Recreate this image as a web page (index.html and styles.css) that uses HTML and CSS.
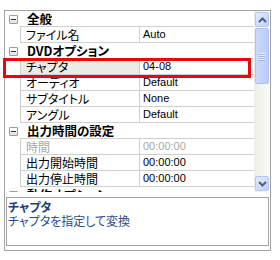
FILE: index.html
```html
<!DOCTYPE html>
<html lang="ja">
<head>
<meta charset="utf-8">
<link rel="stylesheet" href="styles.css">
</head>
<body>
<div class="panel">
  <div class="grid-wrap">
    <div class="grid">
      <div class="row cat"><span class="gut"><i class="minus"></i></span><span class="cname">全般</span></div>
      <div class="row prop"><span class="gut"></span><span class="lbl">ファイル名</span><span class="val">Auto</span></div>
      <div class="row cat"><span class="gut"><i class="minus"></i></span><span class="cname">DVDオプション</span></div>
      <div class="row prop sel"><span class="gut"></span><span class="lbl">チャプタ</span><span class="val">04-08</span></div>
      <div class="row prop"><span class="gut"></span><span class="lbl">オーディオ</span><span class="val">Default</span></div>
      <div class="row prop"><span class="gut"></span><span class="lbl">サブタイトル</span><span class="val">None</span></div>
      <div class="row prop"><span class="gut"></span><span class="lbl">アングル</span><span class="val">Default</span></div>
      <div class="row cat"><span class="gut"><i class="minus"></i></span><span class="cname">出力時間の設定</span></div>
      <div class="row prop dis"><span class="gut"></span><span class="lbl">時間</span><span class="val">00:00:00</span></div>
      <div class="row prop"><span class="gut"></span><span class="lbl">出力開始時間</span><span class="val">00:00:00</span></div>
      <div class="row prop"><span class="gut"></span><span class="lbl">出力停止時間</span><span class="val">00:00:00</span></div>
      <div class="row cat"><span class="gut"><i class="minus"></i></span><span class="cname">動作オプション</span></div>
    </div>
    <div class="scrollbar">
      <div class="sbtn"><svg width="9" height="6" viewBox="0 0 9 6"><path d="M1 5 L4.5 1.5 L8 5" fill="none" stroke="#4d6185" stroke-width="2"/></svg></div>
      <div class="track">
        <div class="thumb"><span class="grip"></span><span class="grip"></span><span class="grip"></span><span class="grip"></span></div>
      </div>
      <div class="sbtn"><svg width="9" height="6" viewBox="0 0 9 6"><path d="M1 1 L4.5 4.5 L8 1" fill="none" stroke="#4d6185" stroke-width="2"/></svg></div>
    </div>
  </div>
  <div class="desc">
    <div class="dtitle">チャプタ</div>
    <div class="dtext">チャプタを指定して変換</div>
  </div>
  <div class="mark"></div>
</div>
</body>
</html>
```
FILE: styles.css
```css
html, body {
  margin: 0;
  padding: 0;
  background: #ffffff;
}
body {
  font-family: "Noto Sans CJK JP", "Liberation Sans", sans-serif;
  font-size: 12px;
  font-feature-settings: "palt";
  color: #000;
}
.panel {
  position: relative;
  margin: 10px 0 0 4px;
  width: 267px;
  height: 241px;
  box-sizing: border-box;
  border: 1px solid #a3a3a3;
  display: flex;
  flex-direction: column;
}
.grid-wrap {
  display: flex;
  height: 181px;
}
.grid {
  flex: 1;
  overflow: hidden;
}
.row {
  display: grid;
  grid-template-columns: 15px 119px 1fr;
  height: 16px;
}
.gut {
  display: flex;
  align-items: center;
  justify-content: center;
  padding-left: 2px;
}
.minus {
  display: block;
  width: 7px;
  height: 7px;
  border: 1px solid #94a0a4;
  border-radius: 1px;
  background: linear-gradient(#ffffff, #e4e2da);
  position: relative;
}
.minus::after {
  content: "";
  position: absolute;
  left: 1px;
  top: 3px;
  width: 5px;
  height: 1px;
  background: #333;
}
.cname {
  grid-column: 2 / 4;
  font-weight: bold;
  line-height: 15px;
  padding-left: 7px;
  border-bottom: 1px solid #cfcfcf;
  white-space: nowrap;
  font-size: 12.5px;
}
.lbl, .val {
  line-height: 15px;
  border-left: 1px solid #cfcfcf;
  border-bottom: 1px solid #cfcfcf;
  white-space: nowrap;
  overflow: hidden;
}
.lbl {
  padding-left: 5px;
}
.val {
  padding-left: 3px;
  font-family: "Liberation Sans", sans-serif;
  font-size: 11px;
}
.sel .lbl {
  background: #ecebe5;
}
.dis .lbl, .dis .val {
  color: #a8a8a8;
}
.scrollbar {
  width: 16px;
  display: flex;
  flex-direction: column;
  background: linear-gradient(90deg, #eeede6, #fbfbf8);
}
.sbtn {
  height: 15px;
  margin: 1px 1px 0 1px;
  box-sizing: border-box;
  border: 1px solid #b5c8f3;
  border-radius: 2px;
  background: linear-gradient(135deg, #e4ebfd, #bfd0fa);
  display: flex;
  align-items: center;
  justify-content: center;
}
.sbtn:last-child {
  margin: 0 1px 1px 1px;
}
.track {
  flex: 1;
  padding: 1px 1px;
}
.thumb {
  height: 56px;
  box-sizing: border-box;
  border: 1px solid #adc2f2;
  border-radius: 2px;
  background: linear-gradient(90deg, #cbd9fc, #bccdf8);
  display: flex;
  flex-direction: column;
  align-items: center;
  justify-content: center;
  gap: 1px;
}
.grip {
  display: block;
  width: 6px;
  height: 1px;
  background: #eef3fe;
  box-shadow: 0 1px 0 #9cb2e8;
}
.desc {
  margin: 5px 1px 4px 1px;
  border: 1px solid #a3a3a3;
  flex: 1;
  padding: 2px 1px;
  color: #1d3d7c;
}
.dtitle {
  font-weight: bold;
  line-height: 14px;
}
.dtext {
  line-height: 14px;
  color: #2a4b8f;
}
.mark {
  position: absolute;
  left: -2px;
  top: 47px;
  width: 248px;
  height: 20px;
  box-sizing: border-box;
  border: 3px solid #e8070e;
}
```
